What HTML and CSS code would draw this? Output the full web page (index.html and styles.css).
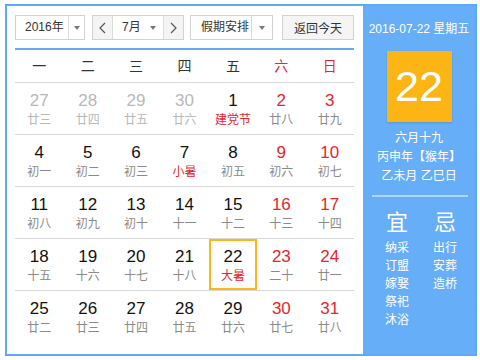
FILE: index.html
```html
<!DOCTYPE html>
<html lang="zh">
<head>
    <meta charset="UTF-8">
    <title>万年历</title>
    <link rel="stylesheet" href="styles.css">
</head>
<body>
<div class="calendar">
    <div class="main">
        <div class="head">
            <div class="select year_select">
                <span class="sel_text">2016年</span>
                <span class="sel_arrow"></span>
            </div>
            <div class="select month_select">
                <span class="month_btn">
                    <svg width="7" height="12" viewBox="0 0 7 12"><path d="M6 1 1 6l5 5" fill="none" stroke="#555" stroke-width="1.2"/></svg>
                </span>
                <span class="sel_text">7月</span>
                <span class="sel_arrow no_line"></span>
                <span class="month_btn next">
                    <svg width="7" height="12" viewBox="0 0 7 12"><path d="M1 1l5 5-5 5" fill="none" stroke="#555" stroke-width="1.2"/></svg>
                </span>
            </div>
            <div class="select holiday_select">
                <span class="sel_text">假期安排</span>
                <span class="sel_arrow"></span>
            </div>
            <button class="today_btn">返回今天</button>
        </div>
        <div class="blue_line"></div>
        <div class="week">
            <span>一</span><span>二</span><span>三</span><span>四</span><span>五</span>
            <span class="red">六</span><span class="red">日</span>
        </div>
        <div class="row">
            <div class="day other"><div class="num">27</div><div class="lunar">廿三</div></div>
            <div class="day other"><div class="num">28</div><div class="lunar">廿四</div></div>
            <div class="day other"><div class="num">29</div><div class="lunar">廿五</div></div>
            <div class="day other"><div class="num">30</div><div class="lunar">廿六</div></div>
            <div class="day"><div class="num">1</div><div class="lunar fest">建党节</div></div>
            <div class="day weekend"><div class="num">2</div><div class="lunar">廿八</div></div>
            <div class="day weekend"><div class="num">3</div><div class="lunar">廿九</div></div>
        </div>
        <div class="row">
            <div class="day"><div class="num">4</div><div class="lunar">初一</div></div>
            <div class="day"><div class="num">5</div><div class="lunar">初二</div></div>
            <div class="day"><div class="num">6</div><div class="lunar">初三</div></div>
            <div class="day"><div class="num">7</div><div class="lunar fest">小暑</div></div>
            <div class="day"><div class="num">8</div><div class="lunar">初五</div></div>
            <div class="day weekend"><div class="num">9</div><div class="lunar">初六</div></div>
            <div class="day weekend"><div class="num">10</div><div class="lunar">初七</div></div>
        </div>
        <div class="row">
            <div class="day"><div class="num">11</div><div class="lunar">初八</div></div>
            <div class="day"><div class="num">12</div><div class="lunar">初九</div></div>
            <div class="day"><div class="num">13</div><div class="lunar">初十</div></div>
            <div class="day"><div class="num">14</div><div class="lunar">十一</div></div>
            <div class="day"><div class="num">15</div><div class="lunar">十二</div></div>
            <div class="day weekend"><div class="num">16</div><div class="lunar">十三</div></div>
            <div class="day weekend"><div class="num">17</div><div class="lunar">十四</div></div>
        </div>
        <div class="row">
            <div class="day"><div class="num">18</div><div class="lunar">十五</div></div>
            <div class="day"><div class="num">19</div><div class="lunar">十六</div></div>
            <div class="day"><div class="num">20</div><div class="lunar">十七</div></div>
            <div class="day"><div class="num">21</div><div class="lunar">十八</div></div>
            <div class="day today"><div class="num">22</div><div class="lunar fest">大暑</div></div>
            <div class="day weekend"><div class="num">23</div><div class="lunar">二十</div></div>
            <div class="day weekend"><div class="num">24</div><div class="lunar">廿一</div></div>
        </div>
        <div class="row">
            <div class="day"><div class="num">25</div><div class="lunar">廿二</div></div>
            <div class="day"><div class="num">26</div><div class="lunar">廿三</div></div>
            <div class="day"><div class="num">27</div><div class="lunar">廿四</div></div>
            <div class="day"><div class="num">28</div><div class="lunar">廿五</div></div>
            <div class="day"><div class="num">29</div><div class="lunar">廿六</div></div>
            <div class="day weekend"><div class="num">30</div><div class="lunar">廿七</div></div>
            <div class="day weekend"><div class="num">31</div><div class="lunar">廿八</div></div>
        </div>
    </div>
    <div class="side">
        <div class="side_date">2016-07-22 星期五</div>
        <div class="big_day">22</div>
        <div class="side_lunar">
            <p>六月十九</p>
            <p>丙申年【猴年】</p>
            <p>乙未月 乙巳日</p>
        </div>
        <div class="side_line"></div>
        <div class="yiji">
            <div class="yiji_col">
                <div class="yiji_title">宜</div>
                <p>纳采</p>
                <p>订盟</p>
                <p>嫁娶</p>
                <p>祭祀</p>
                <p>沐浴</p>
            </div>
            <div class="yiji_col">
                <div class="yiji_title">忌</div>
                <p>出行</p>
                <p>安葬</p>
                <p>造桥</p>
            </div>
        </div>
    </div>
</div>
</body>
</html>
```

FILE: styles.css
```css
body {
    margin: 0;
    font-family: "Liberation Sans", "Noto Sans CJK SC", sans-serif;
}

p {
    margin: 0;
}

.calendar {
    display: flex;
    width: 472px;
    height: 352px;
    margin: 4px 0 0 5px;
    border: 2px solid #5ea9f5;
    box-sizing: border-box;
}

.main {
    width: 356px;
    padding: 9px 9px 0 8px;
    box-sizing: border-box;
    background: #fff;
}

.head {
    display: flex;
    height: 25px;
}

.select {
    display: flex;
    height: 25px;
    border: 1px solid #d2d2d2;
    box-sizing: border-box;
    font-size: 12px;
    color: #333;
    white-space: nowrap;
}

.sel_text {
    flex: 1;
    padding-left: 9px;
    line-height: 23px;
}

.sel_arrow {
    display: flex;
    align-items: center;
    justify-content: center;
    width: 15px;
    border-left: 1px solid #dcdcdc;
}

.sel_arrow::after {
    content: "";
    border-left: 3px solid transparent;
    border-right: 3px solid transparent;
    border-top: 4px solid #777;
}

.sel_arrow.no_line {
    border-left: none;
    width: 20px;
}

.year_select {
    width: 70px;
}

.month_select {
    width: 92px;
    margin-left: 7px;
}

.month_select .sel_text {
    padding-left: 9px;
}

.month_btn {
    display: flex;
    align-items: center;
    justify-content: center;
    width: 19px;
    background: #f4f4f4;
    border-right: 1px solid #dcdcdc;
}

.month_btn.next {
    border-right: none;
    border-left: 1px solid #dcdcdc;
}

.holiday_select {
    width: 83px;
    margin-left: 6px;
}

.holiday_select .sel_text {
    padding-left: 10px;
}

.holiday_select .sel_arrow {
    width: 20px;
}

.today_btn {
    width: 72px;
    height: 25px;
    margin-left: 9px;
    padding: 0;
    border: 1px solid #d2d2d2;
    background: #f5f5f5;
    font-family: inherit;
    font-size: 12px;
    color: #333;
}

.blue_line {
    height: 2px;
    margin-top: 8px;
    background: #64aaf0;
}

.week {
    display: grid;
    grid-template-columns: repeat(7, 1fr);
    height: 32px;
    line-height: 32px;
    text-align: center;
    font-size: 14px;
    color: #333;
    border-bottom: 1px solid #d8d8d8;
}

.red {
    color: #e5262b;
}

.row {
    display: grid;
    grid-template-columns: repeat(7, 1fr);
    border-bottom: 1px solid #d8d8d8;
}

.row:last-child {
    border-bottom: none;
}

.day {
    height: 51px;
    padding-top: 8px;
    box-sizing: border-box;
    text-align: center;
}

.num {
    font-size: 17px;
    line-height: 20px;
    color: #111;
}

.lunar {
    font-size: 12px;
    line-height: 18px;
    color: #8a8a8a;
}

.lunar.fest {
    color: #e5262b;
}

.weekend .num {
    color: #e5262b;
}

.other .num,
.other .lunar {
    color: #b8b8b8;
}

.today {
    border: 2px solid #ffb41c;
    padding-top: 6px;
}

.side {
    width: 112px;
    background: #66aef7;
    color: #fff;
    text-align: center;
}

.side_date {
    margin-top: 14px;
    font-size: 12px;
    line-height: 18px;
    white-space: nowrap;
}

.big_day {
    width: 65px;
    height: 71px;
    margin: 13px auto 0;
    background: #fdb515;
    font-size: 43px;
    line-height: 71px;
    box-shadow: 0 1px 2px rgba(0, 0, 0, 0.15);
}

.side_lunar {
    margin-top: 7px;
    font-size: 12px;
    line-height: 19px;
}

.side_line {
    height: 2px;
    margin: 9px 7px 0 9px;
    background: #b3d6fb;
}

.yiji {
    display: flex;
    padding: 0 6px 0 10px;
    margin-top: 13px;
}

.yiji_col {
    width: 48px;
    font-size: 12px;
    line-height: 18px;
}

.yiji_title {
    font-size: 22px;
    line-height: 26px;
    margin-bottom: 3px;
}
```
